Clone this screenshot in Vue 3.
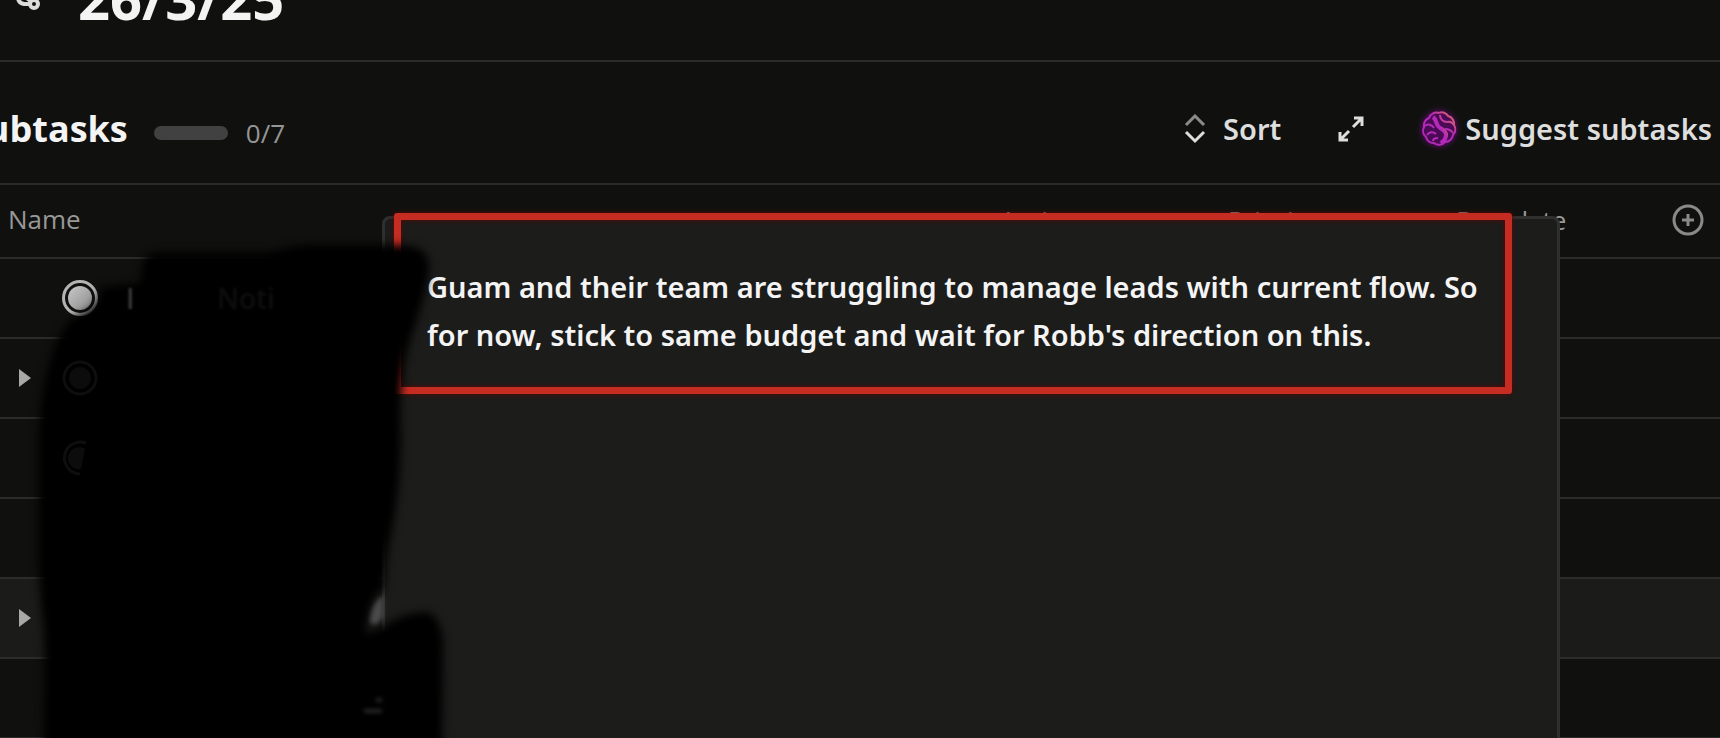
<script setup>
const columns = ['Assignee', 'Priority', 'Due date']

const rows = [
  { id: 1, expandable: false, hovered: false },
  { id: 2, expandable: true, hovered: false },
  { id: 3, expandable: false, hovered: false },
  { id: 4, expandable: false, hovered: false },
  { id: 5, expandable: true, hovered: true },
  { id: 6, expandable: false, hovered: false }
]
</script>

<template>
  <main class="task-page">
    <header class="task-header">
      <svg class="share-icon" width="26" height="32" viewBox="0 0 26 32">
        <circle cx="18" cy="24" r="4" />
        <path d="M2 17q0 6 6 7h6M9 17l6 4" />
      </svg>
      <h1>26/3/25</h1>
    </header>

    <section class="subtasks">
      <div class="toolbar">
        <h2>Subtasks</h2>
        <div class="progress"></div>
        <span class="count">0/7</span>
        <div class="actions">
          <button class="action-btn sort">
            <svg width="24" height="30" viewBox="0 0 24 30">
              <path class="dim" d="M3 11l9-9 9 9" />
              <path d="M3 18l9 9 9-9" />
            </svg>
            <span>Sort</span>
          </button>
          <button class="action-btn expand" aria-label="Expand">
            <svg width="28" height="28" viewBox="0 0 28 28">
              <path d="M17 3h8v8M24 4l-8 8M11 25H3v-8M4 24l8-8" />
            </svg>
          </button>
          <button class="action-btn suggest">
            <svg width="36" height="36" viewBox="0 0 36 36">
              <defs>
                <linearGradient id="brain" x1="0" y1="1" x2="1" y2="0">
                  <stop offset="0.6" stop-color="#b32ab8" />
                  <stop offset="0.9" stop-color="#d9606a" />
                </linearGradient>
              </defs>
              <circle class="core" cx="18" cy="18" r="15" />
              <path
                d="M18 2a7 7 0 0 1 9 3a8 8 0 0 1 6 9a8 8 0 0 1-1 10a8 8 0 0 1-8 7a8 8 0 0 1-11 1a8 8 0 0 1-8-6a8 8 0 0 1-2-10a8 8 0 0 1 5-9a8 8 0 0 1 10-5"
              />
              <path class="fold" d="M12 6c3 2 3 6 5 9s8 4 8 9-3 6-5 8" />
              <path d="M4 15c3-3 7-1 9 2M6 24c2-3 6-4 9-1M12 30c0-2 2-3 5-3M19 4c0 4 3 7 7 7M26 11c3-1 5 0 7 3M24 18c3 0 6 1 8 4" />
            </svg>
            <span>Suggest subtasks</span>
          </button>
        </div>
      </div>

      <table class="task-table">
        <thead>
          <tr>
            <th class="name-col">Name</th>
            <th v-for="col in columns" :key="col">{{ col }}</th>
            <th class="add-col">
              <button class="add-btn" aria-label="Add column">
                <svg width="32" height="32" viewBox="0 0 32 32">
                  <circle cx="16" cy="16" r="14" />
                  <path d="M16 10v12M10 16h12" />
                </svg>
              </button>
            </th>
          </tr>
        </thead>
        <tbody>
          <tr v-for="row in rows" :key="row.id" :class="{ hovered: row.hovered }">
            <td>
              <div class="name-cell">
                <button class="caret" :class="{ hidden: !row.expandable }" aria-label="Expand row">
                  <svg width="14" height="20" viewBox="0 0 14 20">
                    <path d="M1 1l12 9-12 9z" />
                  </svg>
                </button>
                <span class="status"></span>
              </div>
            </td>
            <td v-for="col in columns" :key="col"></td>
            <td></td>
          </tr>
        </tbody>
      </table>
    </section>

    <aside class="popover">
      <p>
        Guam and their team are struggling to manage leads with current flow. So for now, stick to
        same budget and wait for Robb's direction on this.
      </p>
    </aside>

    <!-- brush strokes hiding the task names -->
    <svg class="redaction" width="460" height="520" viewBox="0 220 460 520">
      <path
        class="ink"
        d="M143 262Q146 252 160 252L270 252Q285 247 305 245L405 245Q430 248 429 268Q427 290 415 325Q406 350 403 375Q399 400 401 440Q400 490 392 530Q386 555 384 590L378 592Q366 610 366 634L384 626Q405 612 428 612Q440 618 443 640L442 745L43 745Q46 660 44 630Q38 580 39 540L39 430Q42 380 55 345Q64 325 74 317Q100 310 101 287L140 283Z"
      />
      <text class="ghost lit" x="126" y="309">I</text>
      <text class="ghost" x="217" y="309">Noti</text>
      <circle class="ghost-ring" cx="80" cy="378" r="16" />
      <circle class="ghost-dot" cx="80" cy="378" r="11" />
      <path class="ghost-ring" d="M86 443a16 16 0 1 0-6 31" />
      <path class="ghost-dot" d="M85 449a11 11 0 1 0-4 20z" />
      <path class="smudge" d="M370 622q2-20 13-26v20q-6 10-10 8z" />
      <path class="smudge faint" d="M364 711h18M376 700h6" />
    </svg>
  </main>
</template>

<style>
body {
  background-color: #10110f;
}
</style>

<style scoped>
.task-page {
  position: relative;
  height: 100vh;
  overflow: hidden;
  background-color: #10110f;
  color: #f4f4f4;
  font-family: "Open Sans", "Noto Sans", sans-serif;
}

.task-header {
  display: flex;
  align-items: flex-end;
  gap: 36px;
  height: 62px;
  padding: 0 16px 34px;
  box-sizing: border-box;
  border-bottom: 2px solid #2c2c2b;
}

.share-icon {
  flex-shrink: 0;
  margin-bottom: 14px;
  fill: none;
  stroke: #dcdcdc;
  stroke-width: 4;
}

h1 {
  margin: 0;
  font-size: 56px;
  line-height: 56px;
  font-weight: 700;
}

.toolbar {
  display: flex;
  align-items: center;
  height: 123px;
  margin-left: -34px;
  padding-top: 12px;
  box-sizing: border-box;
  border-bottom: 2px solid #2a2a29;
}

h2 {
  margin: 0;
  font-size: 36px;
  font-weight: 700;
}

.progress {
  width: 74px;
  height: 14px;
  margin: 8px 18px 0 26px;
  border-radius: 7px;
  background-color: #414141;
}

.count {
  margin-top: 8px;
  font-size: 26px;
  color: #969696;
}

.actions {
  display: flex;
  align-items: center;
  margin-left: auto;
}

.action-btn {
  display: flex;
  align-items: center;
  padding: 0;
  border: none;
  background: none;
  color: #dedede;
  font-family: "Noto Sans", sans-serif;
  font-size: 29px;
  font-weight: 600;
  cursor: pointer;
  white-space: nowrap;
}

.action-btn svg {
  fill: none;
  stroke: #dedede;
  stroke-width: 3;
}

.action-btn .dim {
  stroke: #8b8b8b;
}

.sort {
  gap: 16px;
  margin-right: 56px;
}

.expand {
  margin-right: 56px;
}

.suggest {
  gap: 8px;
  margin-right: 8px;
}

.suggest svg {
  overflow: visible;
  stroke: url(#brain);
  stroke-width: 2;
  filter: drop-shadow(0 0 3px #7a0c8c);
}

.suggest .core {
  fill: #4b0a55;
  stroke: none;
}

.suggest .fold {
  stroke-width: 4;
}

.task-table {
  width: 100%;
  table-layout: fixed;
  border-collapse: collapse;
}

.task-table th,
.task-table td {
  box-sizing: border-box;
  padding: 0;
  border-bottom: 2px solid #2c2c2b;
  text-align: left;
}

.task-table th {
  width: 228px;
  height: 73px;
  padding: 0 0 2px 12px;
  font-size: 26px;
  font-weight: 400;
  color: #989898;
}

.task-table .name-col {
  width: auto;
  padding: 0 0 4px 8px;
}

.task-table .add-col {
  width: 48px;
  padding: 0 0 2px;
}

.task-table td {
  height: 80px;
}

.task-table .hovered {
  background-color: #1b1b1a;
}

.add-btn {
  display: flex;
  padding: 0;
  border: none;
  background: none;
  cursor: pointer;
}

.add-btn svg {
  fill: none;
  stroke: #8a8a8a;
  stroke-width: 3;
}

.name-cell {
  display: flex;
  align-items: center;
  gap: 30px;
  padding-left: 18px;
}

.caret {
  display: flex;
  padding: 0;
  border: none;
  background: none;
  cursor: pointer;
}

.caret svg {
  fill: #a8a8a8;
}

.caret.hidden {
  visibility: hidden;
}

.status {
  width: 36px;
  height: 36px;
  box-sizing: border-box;
  border: 3px solid #b4b4b4;
  border-radius: 50%;
  padding: 3px;
  background: linear-gradient(135deg, #c8c8c8, #8c8c8c) content-box;
}

.popover {
  position: absolute;
  top: 216px;
  right: 160px;
  bottom: -8px;
  left: 382px;
  box-sizing: border-box;
  padding: 0 45px 0 9px;
  border: 3px solid #2f2f2e;
  border-radius: 8px;
  background-color: #1c1c1b;
}

.popover p {
  margin: -6px 0 0;
  padding: 43px 20px 28px 26px;
  border: 7px solid #c52c22;
  border-radius: 3px;
  box-shadow: 0 0 5px #5a0805, inset 0 0 5px #5a0805;
  font-family: "Noto Sans", sans-serif;
  font-size: 29px;
  line-height: 48px;
  font-weight: 600;
}

.redaction {
  position: absolute;
  top: 220px;
  left: 0;
}

.ink {
  fill: #000000;
  filter: blur(4px);
}

.ghost {
  font-size: 28px;
  font-weight: 600;
  fill: #0e0e0e;
  filter: blur(1px);
}

.ghost.lit {
  fill: #383838;
}

.ghost-ring {
  fill: none;
  stroke: #0e0e0e;
  stroke-width: 3;
}

.ghost-dot {
  fill: #0c0c0c;
}

.smudge {
  fill: #4a4a4a;
  filter: blur(2px);
}

.smudge.faint {
  fill: none;
  stroke: #333333;
  stroke-width: 3;
}
</style>
